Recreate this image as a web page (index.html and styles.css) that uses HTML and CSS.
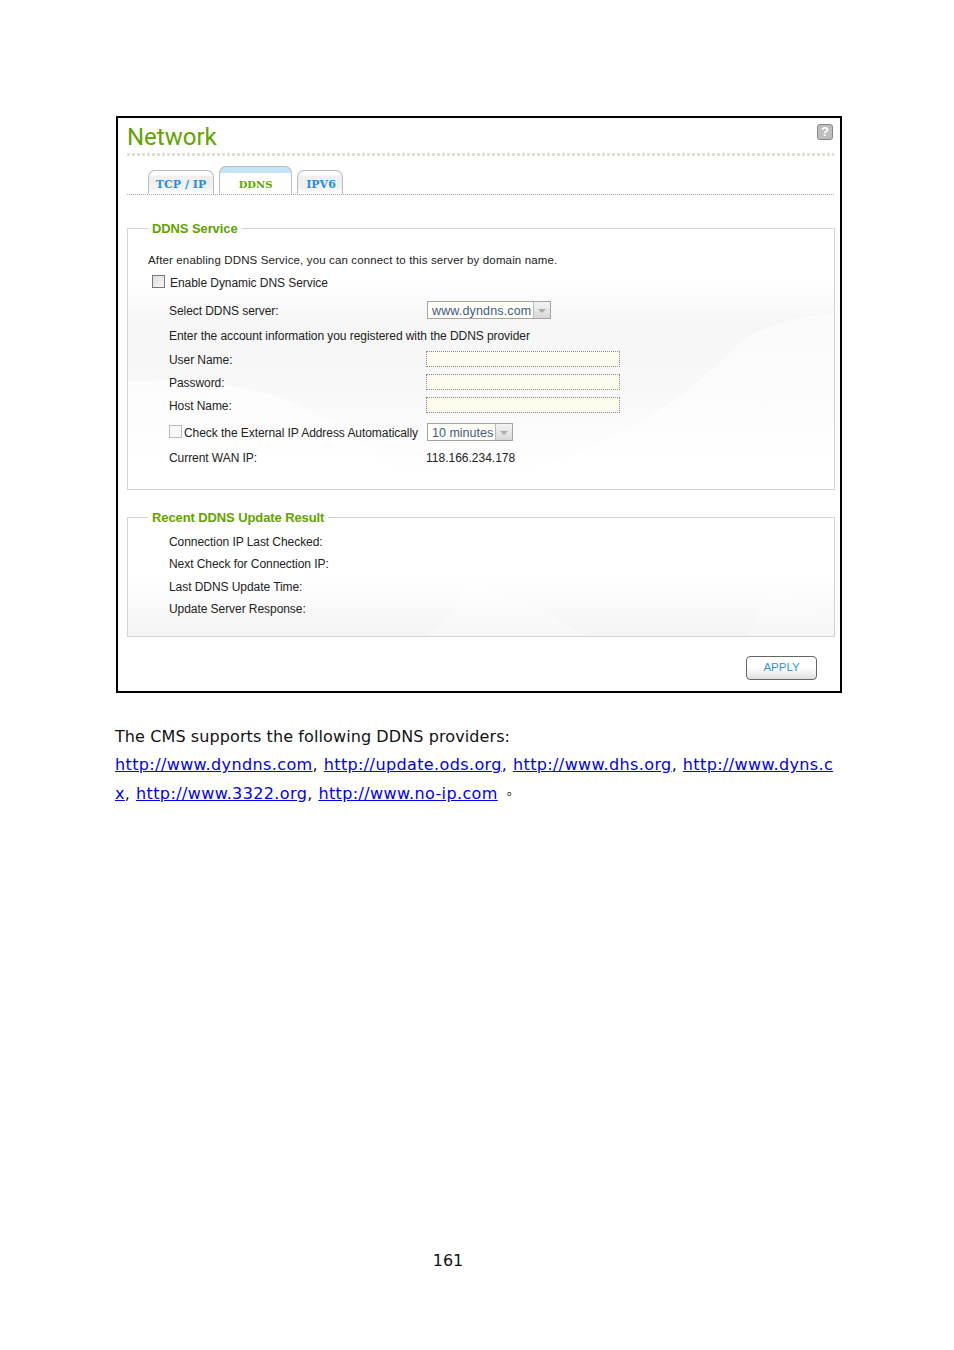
FILE: index.html
```html
<!DOCTYPE html>
<html lang="en">
<head>
    <meta charset="UTF-8">
    <meta name="viewport" content="width=device-width, initial-scale=1.0">
    <title>Network - DDNS</title>
    <link rel="stylesheet" href="styles.css">
</head>
<body>
    <div class="page">
        <div class="window">
            <div class="window-head">
                <h1 class="window-title">Network</h1>
                <div class="help">?</div>
            </div>
            <div class="tabs">
                <div class="tab">TCP / IP</div>
                <div class="tab tab-active">DDNS</div>
                <div class="tab tab-v6">IPV6</div>
            </div>

            <fieldset class="group group-service">
                <legend>DDNS Service</legend>
                <svg class="swoosh" viewBox="0 0 706 260" preserveAspectRatio="none">
                    <path d="M300 260 C440 245 550 180 610 110 C640 90 670 82 706 80 L706 260 Z" fill="#fff" fill-opacity="0.55"/>
                    <path d="M0 150 C110 140 210 170 280 260 L0 260 Z" fill="#fff" fill-opacity="0.6"/>
                </svg>
                <div class="row row-intro">After enabling DDNS Service, you can connect to this server by domain name.</div>
                <div class="row row-enable">
                    <span class="check check-dark"></span>
                    <span>Enable Dynamic DNS Service</span>
                </div>
                <div class="row row-field row-select">
                    <span class="label">Select DDNS server:</span>
                    <div class="select select-server">
                        <span class="select-text">www.dyndns.com</span>
                        <span class="select-btn"></span>
                    </div>
                </div>
                <div class="row row-note">Enter the account information you registered with the DDNS provider</div>
                <div class="row row-field row-input">
                    <span class="label">User Name:</span>
                    <div class="input"></div>
                </div>
                <div class="row row-field row-input">
                    <span class="label">Password:</span>
                    <div class="input"></div>
                </div>
                <div class="row row-field row-input">
                    <span class="label">Host Name:</span>
                    <div class="input"></div>
                </div>
                <div class="row row-field row-auto">
                    <span class="label label-check">
                        <span class="check"></span>
                        <span>Check the External IP Address Automatically</span>
                    </span>
                    <div class="select select-time">
                        <span class="select-text">10 minutes</span>
                        <span class="select-btn"></span>
                    </div>
                </div>
                <div class="row row-field row-wan">
                    <span class="label">Current WAN IP:</span>
                    <span class="value">118.166.234.178</span>
                </div>
            </fieldset>

            <fieldset class="group group-result">
                <legend>Recent DDNS Update Result</legend>
                <svg class="swoosh" viewBox="0 0 706 120" preserveAspectRatio="none">
                    <path d="M330 58 C390 70 420 100 460 120 L300 120 C320 100 340 80 330 58 Z" fill="#fff" fill-opacity="0.35"/>
                    <path d="M640 65 C670 75 690 90 706 100 L706 120 L620 120 Z" fill="#fff" fill-opacity="0.25"/>
                </svg>
                <div class="row row-field">Connection IP Last Checked:</div>
                <div class="row row-field">Next Check for Connection IP:</div>
                <div class="row row-field">Last DDNS Update Time:</div>
                <div class="row row-field">Update Server Response:</div>
            </fieldset>

            <div class="actions">
                <button class="apply">APPLY</button>
            </div>
        </div>

        <div class="doc">
            <p>The CMS supports the following DDNS providers:</p>
            <p class="links"><a href="#">http://www.dyndns.com</a>, <a href="#">http://update.ods.org</a>, <a href="#">http://www.dhs.org</a>, <a href="#">http://www.dyns.c<br>x</a>, <a href="#">http://www.3322.org</a>, <a href="#">http://www.no-ip.com</a> <span class="stop">。</span></p>
        </div>

        <div class="page-number">161</div>
    </div>
</body>
</html>
```

FILE: styles.css
```css
body {
    margin: 0;
    background: #fff;
    font-family: "DejaVu Sans", sans-serif;
}
.page {
    height: 1350px;
    box-sizing: border-box;
    padding: 116px 0 0 115px;
    position: relative;
}
.window {
    width: 726px;
    height: 577px;
    margin-left: 1px;
    box-sizing: border-box;
    border: 2px solid #000;
    padding: 0 6px 0 9px;
    font-family: "Liberation Sans", Arial, sans-serif;
    font-size: 12px;
    letter-spacing: -0.06px;
    color: #222;
}
.window-head {
    display: flex;
    justify-content: space-between;
    height: 38px;
    box-sizing: content-box;
    background: repeating-linear-gradient(90deg, #e0e0d0 0, #e0e0d0 3px, transparent 3px, transparent 5px) bottom / 100% 3px no-repeat;
}
.window-title {
    margin: 3px 0 0;
    font-family: Roboto, sans-serif;
    font-size: 24px;
    line-height: 32px;
    font-weight: 400;
    letter-spacing: 0;
    color: #62a300;
}
.help {
    width: 14px;
    height: 14px;
    margin: 6px 1px 0 0;
    border: 1px solid #888;
    border-radius: 3px;
    background: #bdbdbd;
    color: #fff;
    font-weight: bold;
    font-size: 13px;
    line-height: 14px;
    text-align: center;
}
.tabs {
    display: flex;
    align-items: flex-end;
    gap: 5px;
    height: 38px;
    padding-left: 21px;
    border-bottom: 1px dotted #aaa;
}
.tab {
    width: 64px;
    height: 23px;
    border: 1px solid #bbb;
    border-bottom: 0;
    border-radius: 7px 7px 0 0;
    background: linear-gradient(#fff 4px, #f0f0f0 5px, #f0f0f0 16px, #fff);
    color: #2a8fd8;
    font-family: "DejaVu Serif", serif;
    font-size: 11px;
    font-weight: bold;
    line-height: 27px;
    letter-spacing: 0;
    text-align: center;
}
.tab-active {
    width: 71px;
    height: 27px;
    background: linear-gradient(#c4e2f8 6px, #fefefc 6px);
    color: #62a300;
    font-size: 10px;
    line-height: 36px;
}
.tab-v6 {
    width: 44px;
    text-indent: 2px;
}
.group {
    position: relative;
    width: 708px;
    box-sizing: border-box;
    margin: 25px 0 0;
    padding: 13px 0 0;
    border: 1px solid #d4d4d4;
}
.group legend {
    position: relative;
    margin-left: 20px;
    padding: 2px 4px 0;
    font-size: 13px;
    line-height: 14px;
    font-weight: bold;
    letter-spacing: -0.1px;
    color: #62a300;
}
.swoosh {
    position: absolute;
    left: 0;
    top: 0;
    width: 100%;
    height: 100%;
}
.group-service {
    height: 270px;
    background: linear-gradient(#fff 50px, #f6f6f6 95px, #f8f8f8 160px, #fff 245px);
}
.group-result {
    height: 128px;
    margin-top: 19px;
    padding-top: 6px;
    background: linear-gradient(#fff 60px, #f2f2f2 125px);
}
.group-result .row {
    height: 22.3px;
}
.row {
    position: relative;
    display: flex;
    align-items: center;
    height: 22px;
}
.row-intro {
    padding-left: 20px;
    font-size: 11.5px;
    letter-spacing: 0.14px;
}
.row-enable {
    margin-top: 1px;
    padding-left: 24px;
    gap: 5px;
}
.row-field,
.row-note {
    padding-left: 41px;
}
.row-select {
    margin-top: 6px;
}
.row-note {
    margin: 3px 0 2px;
}
.row-input {
    margin-top: 1px;
}
.row-auto {
    margin-top: 5px;
}
.row-wan {
    margin-top: 3px;
}
.label {
    width: 257px;
    flex-shrink: 0;
}
.label-check {
    display: flex;
    align-items: center;
    gap: 2px;
    white-space: nowrap;
}
.check {
    width: 11px;
    height: 11px;
    margin-top: -3px;
    flex-shrink: 0;
    border: 1px solid #bbb;
    background: #f8f8f8;
}
.check-dark {
    border-color: #777;
    background: linear-gradient(135deg, #ddd, #f8f8f8);
}
.select {
    display: flex;
    height: 18px;
    margin: -2px 0 0 1px;
    box-sizing: border-box;
    border: 1px solid #a4a4a4;
    background: #fffef6;
    color: #3d5c86;
    font-size: 12.5px;
    letter-spacing: 0.15px;
    line-height: 18px;
}
.select-server {
    width: 124px;
}
.select-time {
    width: 86px;
    letter-spacing: 0;
}
.select-text {
    flex: 1;
    padding-left: 4px;
    white-space: nowrap;
}
.select-btn {
    position: relative;
    width: 16px;
    flex-shrink: 0;
    border-left: 1px solid #bbb;
    background: linear-gradient(#f4f4f4, #d8d8d8);
}
.select-btn::after {
    content: "";
    position: absolute;
    left: 4px;
    top: 7px;
    border: 4px solid transparent;
    border-top-color: #aaa;
    border-bottom: 0;
}
.input {
    width: 194px;
    height: 16px;
    margin-top: -2px;
    box-sizing: border-box;
    border: 1px dotted #888;
    background: #fdfcee;
}
.value {
    letter-spacing: 0;
}
.actions {
    display: flex;
    justify-content: flex-end;
    padding: 19px 17px 0 0;
}
.apply {
    width: 71px;
    height: 24px;
    padding: 0 0 2px;
    border: 1px solid #666;
    border-radius: 4px;
    background: linear-gradient(#fff 45%, #ececec 80%, #ddd);
    color: #2a9ad8;
    font-family: "Liberation Sans", Arial, sans-serif;
    font-size: 11.5px;
}
.doc {
    margin-top: 30px;
    font-size: 16px;
    line-height: 28.5px;
    letter-spacing: 0.1px;
    color: #111;
}
.doc p {
    margin: 0;
    white-space: nowrap;
}
.doc .links {
    margin-top: -0.4px;
    letter-spacing: 0.5px;
}
.doc a {
    color: #0000ee;
    letter-spacing: 0.38px;
}
.stop {
    font-family: "Noto Sans CJK TC", sans-serif;
    font-size: 12px;
}
.page-number {
    position: absolute;
    left: 0;
    right: 58px;
    top: 1251px;
    text-align: center;
    font-size: 16px;
    line-height: 20px;
    color: #111;
}
```
